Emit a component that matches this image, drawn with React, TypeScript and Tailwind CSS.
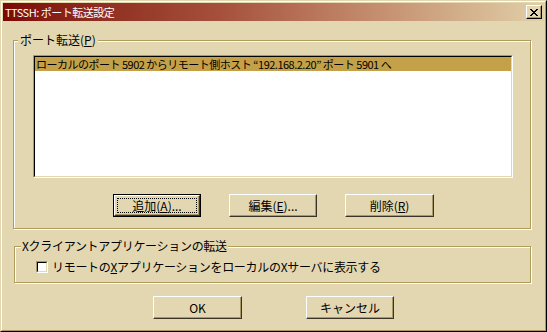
import React from "react";

const font = { fontFamily: '"Noto Sans CJK JP", "Noto Sans", sans-serif' };

const Raised = ({ children, isDefault = false, w }: { children: React.ReactNode; isDefault?: boolean; w: string }) => {
  if (isDefault) {
    return (
      <div className={`${w} h-[23px] border border-black`}>
        <div className="h-full border border-t-white border-l-white border-r-[#3b3426] border-b-[#3b3426] shadow-[inset_-1px_-1px_0_#a8986a] p-[2px]">
          <div className="h-full border border-dotted border-black flex items-center justify-center text-[12px] leading-none text-black">
            {children}
          </div>
        </div>
      </div>
    );
  }
  return (
    <div className={`${w} h-[23px] border border-t-white border-l-white border-r-[#3b3426] border-b-[#3b3426] shadow-[inset_-1px_-1px_0_#a8986a] flex items-center justify-center text-[12px] leading-none text-black`}>
      {children}
    </div>
  );
};

const App = () => {
  return (
    <div style={font} className="w-[547px] h-[332px] bg-[#e3d7b1] border border-t-[#e3d7b1] border-l-[#e3d7b1] border-r-black border-b-black overflow-hidden">
      <div className="h-full border border-t-white border-l-white border-r-[#a8986a] border-b-[#a8986a] p-px flex flex-col">
        {/* title bar */}
        <div className="h-[18px] shrink-0 bg-linear-to-r from-[#7c0606] via-[#a5503c] via-40% to-[#e0d0a8] flex items-center justify-between pl-[2px] pr-[2px]">
          <span className="text-white text-[11px] leading-none tracking-[-0.5px]">TTSSH: ポート転送設定</span>
          <div className="w-[16px] h-[14px] bg-[#e3d7b1] border border-t-white border-l-white border-r-black border-b-black shadow-[inset_-1px_-1px_0_#a8986a] flex items-center justify-center">
            <svg width="8" height="7" viewBox="0 0 8 7">
              <path d="M0 0 L7 7 M1 0 L8 7 M7 0 L0 7 M8 0 L1 7" stroke="black" strokeWidth="1" />
            </svg>
          </div>
        </div>

        {/* port forwarding group */}
        <fieldset className="ml-[10px] mt-[12px] w-[518px] border border-[#b09d5c] shadow-[inset_1px_1px_0_white,1px_1px_0_white] pl-[19px] pt-[8px] pb-[11px]">
          <legend className="-ml-[15px] px-[2px] text-[12px] leading-[14px] text-black bg-[#e3d7b1]">
            ポート転送(<span className="underline">P</span>)
          </legend>
          <div className="w-[480px] h-[123px] bg-white border border-t-[#a8986a] border-l-[#a8986a] border-r-white border-b-white">
            <div className="h-full border border-t-black border-l-black border-r-[#e3d7b1] border-b-[#e3d7b1]">
              <div className="h-[14px] bg-[#c4a148] text-[11px] leading-[14px] text-black pl-px whitespace-nowrap tracking-[-0.5px]">
                ローカルのポート 5902 からリモート側ホスト “192.168.2.20” ポート 5901 へ
              </div>
            </div>
          </div>
          <div className="mt-[16px] ml-[80px] flex gap-[28px]">
            <Raised w="w-[88px]" isDefault>
              追加(<span className="underline">A</span>)...
            </Raised>
            <Raised w="w-[88px]">
              編集(<span className="underline">E</span>)...
            </Raised>
            <Raised w="w-[89px]">
              削除(<span className="underline">R</span>)
            </Raised>
          </div>
        </fieldset>

        {/* X forwarding group */}
        <fieldset className="ml-[11px] mt-[10px] w-[517px] border border-[#b09d5c] shadow-[inset_1px_1px_0_white,1px_1px_0_white] pl-[21px] pt-[7px] pb-[8px]">
          <legend className="-ml-[15px] px-[1px] text-[12px] leading-[14px] text-black bg-[#e3d7b1] tracking-[-0.3px]">
            Xクライアントアプリケーションの転送
          </legend>
          <div className="flex items-center gap-[4px] h-[14px]">
            <div className="w-[12px] h-[12px] bg-white border border-t-[#a8986a] border-l-[#a8986a] border-r-white border-b-white">
              <div className="h-full border border-t-black border-l-black border-r-[#e3d7b1] border-b-[#e3d7b1]" />
            </div>
            <span className="text-[12px] leading-[14px] text-black whitespace-nowrap tracking-[-0.3px]">
              リモートの<span className="underline">X</span>アプリケーションをローカルのXサーバに表示する
            </span>
          </div>
        </fieldset>

        {/* bottom buttons */}
        <div className="mt-[13px] ml-[150px] flex gap-[64px]">
          <Raised w="w-[89px]">OK</Raised>
          <Raised w="w-[88px]">キャンセル</Raised>
        </div>
      </div>
    </div>
  );
};

export default App;
